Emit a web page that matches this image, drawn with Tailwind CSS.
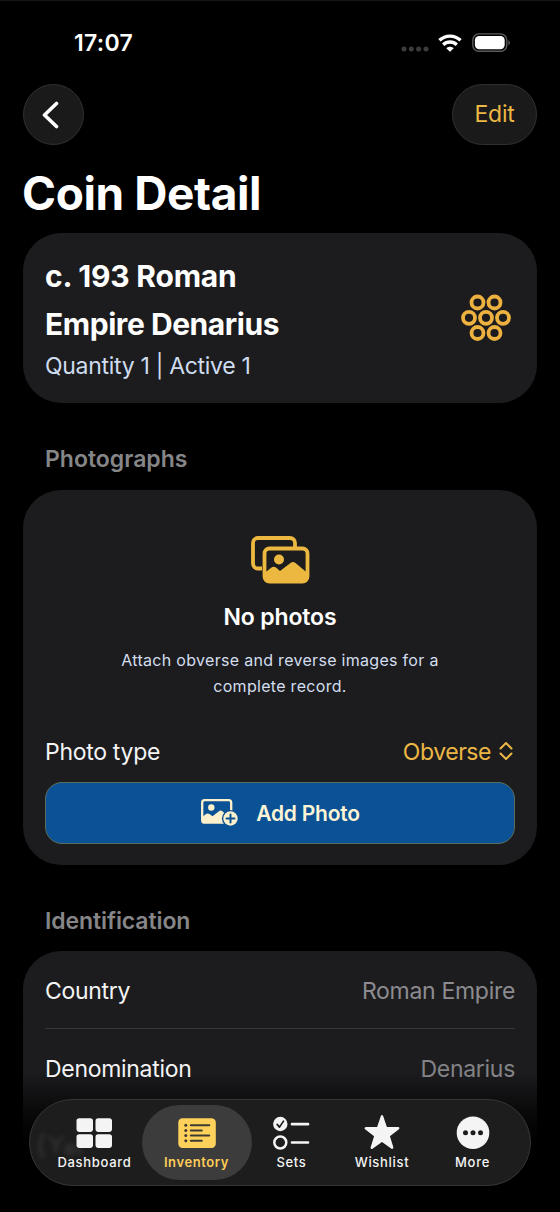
<!DOCTYPE html>
<html lang="en">
<head>
<meta charset="utf-8">
<title>Coin Detail</title>
<script src="https://cdn.jsdelivr.net/npm/@tailwindcss/browser@4"></script>
</head>
<body class="bg-black">
<div class="relative w-[560px] h-[1212px] overflow-hidden bg-black border-t border-[#161616] text-white font-['Inter',sans-serif] whitespace-nowrap">

  <!-- Status bar -->
  <header class="h-[83px] flex items-start justify-between pt-[28px] pl-[74px] pr-[49px]">
    <span class="text-[23px] leading-[28px] font-semibold tracking-[0.3px]">17:07</span>
    <span class="flex items-center h-[28px]">
      <svg width="28" height="6" viewBox="0 0 28 6" class="mt-[11px]" fill="#3c3c3c"><circle cx="3" cy="3" r="2.5"/><circle cx="10.3" cy="3" r="2.5"/><circle cx="17.6" cy="3" r="2.5"/><circle cx="25" cy="3" r="2.5"/></svg>
      <svg width="24" height="18" viewBox="0 0 24 18" class="ml-[9px] -mt-px" fill="none" stroke="#fff" stroke-width="3.300"><path d="M1.400 6.300C7.400.6 16.600.6 22.600 6.300"/><path d="M5.200 10.700C9 7.100 15 7.100 18.800 10.700"/><path d="M12 17.800 8.300 14.300C10.500 12.300 13.500 12.300 15.700 14.300Z" fill="#fff" stroke="none"/></svg>
      <svg width="39" height="19" viewBox="0 0 39 19" class="ml-[10px] -mt-[2px]"><rect x=".8" y=".9" width="34" height="17.400" rx="6" fill="none" stroke="#5b5b5b" stroke-width="1.400"/><rect x="2.900" y="3" width="29.800" height="13.200" rx="4.200" fill="#fff"/><path d="M36.400 7.200c2 .8 2 4.200 0 5Z" fill="#5b5b5b"/></svg>
    </span>
  </header>

  <!-- Navigation -->
  <nav class="flex justify-between px-[23px] h-[61px]">
    <button class="size-[61px] rounded-full bg-[#1a1a1a] border border-[#303030] flex items-center justify-center">
      <svg width="20" height="28" viewBox="0 0 20 28" class="mr-[5px]" fill="none" stroke="#fff" stroke-width="3.600" stroke-linecap="round" stroke-linejoin="round"><path d="M15.500 2.500 3.500 14l12 11.500"/></svg>
    </button>
    <button class="w-[85px] h-[61px] rounded-full bg-[#1a1a1a] border border-[#303030] text-[#ecb745] text-[23px] tracking-[-0.2px]">Edit</button>
  </nav>

  <main>
    <h1 class="pl-[22px] mt-[18px] h-[70px] text-[46px] leading-[60px] font-bold tracking-[-0.4px]">Coin Detail</h1>

    <section class="mx-[23px] h-[170px] rounded-[38px] bg-[#1c1c1e] flex items-center justify-between pl-[22px] pr-[25px]">
      <div>
        <h2 class="text-[30px] leading-[48px] font-bold tracking-[-0.5px]"><span class="tracking-[-0.200px]">c. 193 Roman</span><br><span class="tracking-[-0.450px]">Empire Denarius</span></h2>
        <p class="text-[23px] leading-[36px] text-[#cfdcf0] tracking-[-0.300px]">Quantity 1 | Active 1</p>
      </div>
      <svg width="52" height="48" viewBox="0 0 52 48" fill="none" stroke="#ecb13f" stroke-width="3.800"><circle cx="17.500" cy="8.500" r="6"/><circle cx="34.500" cy="8.500" r="6"/><circle cx="9" cy="23.800" r="6"/><circle cx="26" cy="23.800" r="6"/><circle cx="43" cy="23.800" r="6"/><circle cx="17.500" cy="39" r="6"/><circle cx="34.500" cy="39" r="6"/></svg>
    </section>

    <h3 class="pl-[45px] h-[87px] pt-[42px] text-[23px] leading-[28px] font-semibold text-[#868688] tracking-[0px]">Photographs</h3>

    <section class="mx-[23px] h-[375px] rounded-[38px] bg-[#1c1c1e] px-[22px] pt-[45px] flex flex-col">
      <svg width="60" height="50" viewBox="0 0 60 50" class="self-center" fill="none" stroke="#ecb840" stroke-width="3.800"><path d="M12 33.500H8A5 5 0 0 1 3 28.500V8A5 5 0 0 1 8 3H40A5 5 0 0 1 45 8V12"/><rect x="14.500" y="13.500" width="43" height="33" rx="5"/><circle cx="29" cy="24.500" r="5" fill="#ecb840" stroke="none"/><path d="M14.500 38 21.500 32.500Q24 31 26.300 32.800L30 36 40.500 28Q43 26 45.500 28L57.500 38V43Q57 47 53 47H18Q14.500 47 14.500 43Z" fill="#ecb840" stroke="none"/></svg>
      <h4 class="mt-[17px] text-center text-[23px] leading-[30px] font-semibold tracking-[-0.150px]">No photos</h4>
      <p class="mt-[15px] text-center text-[16px] leading-[26px] text-[#d3deef] tracking-[0.300px]">Attach obverse and reverse images for a<br>complete record.</p>
      <div class="mt-[38px] h-[30px] flex items-center justify-between text-[23px] leading-[30px] tracking-[-0.300px]">
        <span class="text-[#f4f4f5]">Photo type</span>
        <span class="flex items-center text-[#ecb745] tracking-[-0.450px]">Obverse
          <svg width="16" height="20" viewBox="0 0 16 20" class="ml-[7px] mr-px -mt-[3px]" fill="none" stroke="#ecb745" stroke-width="2" stroke-linecap="round" stroke-linejoin="round"><path d="M2.500 7.500 8 2l5.500 5.500M2.500 12.500 8 18l5.500-5.500"/></svg>
        </span>
      </div>
      <button class="mt-[15px] h-[62px] rounded-[17px] bg-[#0b5195] border border-[#5a6e60] flex items-center justify-center text-[#fdf5d5] text-[21px] font-semibold">
        <svg width="40" height="30" viewBox="0 0 40 30" class="mr-[16px] -mt-[2px]" fill="none"><rect x="2.200" y="3.200" width="29" height="22.500" rx="2.500" stroke="#fdf0cc" stroke-width="2.300"/><circle cx="11.300" cy="10.500" r="3.200" fill="#fdf0cc"/><path d="M2 20 6.500 16.800Q8 16 9.500 17L12.500 19.300 19 14.200Q20.500 13 22 14L27 18V26H4.500Q2 26 2 23.500Z" fill="#fdf0cc"/><circle cx="30.500" cy="21.500" r="8.600" fill="#0b5195"/><circle cx="30.500" cy="21.500" r="7.200" fill="#fdf0cc"/><path d="M30.500 17.500v8M26.500 21.500h8" stroke="#0b5195" stroke-width="2" stroke-linecap="round"/></svg>
        <span class="mt-px tracking-[-0.250px]">Add Photo</span>
      </button>
    </section>

    <h3 class="pl-[45px] h-[86px] pt-[42px] text-[23px] leading-[28px] font-semibold text-[#868688] tracking-[-0.100px]">Identification</h3>

    <section class="mx-[23px] h-[240px] rounded-t-[38px] bg-linear-to-b from-[#1c1c1e] from-50% to-black to-95% px-[22px] text-[23px] tracking-[-0.300px]">
      <div class="h-[78px] pt-[3px] flex items-center justify-between border-b border-[#37373a]"><span class="text-[#f4f4f5]">Country</span><span class="text-[#8c8c90]">Roman Empire</span></div>
      <div class="h-[78px] pt-[2px] flex items-center justify-between"><span class="text-[#f4f4f5]">Denomination</span><span class="text-[#838387]">Denarius</span></div>
    </section>
  </main>

  <!-- Floating tab bar -->
  <nav class="absolute left-[29px] top-[1098px] w-[502px] h-[87px] rounded-full bg-[#1d1d1d] border border-[#363636] overflow-hidden text-[13px] leading-[16px] font-medium tracking-[0.700px] text-[#f4f4f4]">
    <!-- Blurred row showing through the glass -->
    <svg class="absolute left-[4px] top-[30px] blur-[2px]" width="60" height="34" viewBox="0 0 60 34" fill="none" stroke="#2e2e2e" stroke-width="3.500"><path d="M10 4Q2 15 10 28M15 6l7 9 7-9M22 15v9M32 20h9q-1-6-5-5-5 1-4 6 3 5 8 2M46 16v9"/></svg>
    <div class="relative h-full flex pt-[5px] pl-[16px]">
      <div class="w-[96px] flex flex-col items-center pt-[11px]">
        <svg width="38" height="34" viewBox="0 0 38 34" fill="#f4f4f4"><rect x="1.500" y="2.300" width="16.500" height="13.600" rx="2.800"/><rect x="20.500" y="2.300" width="16.500" height="13.600" rx="2.800"/><rect x="1.500" y="18.300" width="16.500" height="13.600" rx="2.800"/><rect x="20.500" y="18.300" width="16.500" height="13.600" rx="2.800"/></svg>
        <span class="mt-[4px] ml-px">Dashboard</span>
      </div>
      <div class="w-[110px] h-[75px] rounded-full bg-[#3c3c3c] flex flex-col items-center pt-[11px] text-[#fecd57] font-semibold tracking-[0.600px]">
        <svg width="40" height="34" viewBox="0 0 40 34"><rect x="1.300" y="2.300" width="37.500" height="29.700" rx="4.200" fill="#fed25a"/><g fill="#3c3a33"><circle cx="8.800" cy="9.200" r="1.500"/><circle cx="8.800" cy="14.400" r="1.500"/><circle cx="8.800" cy="19.600" r="1.500"/><circle cx="8.800" cy="24.800" r="1.500"/></g><path d="M13.800 9.200h18.500M13.800 14.400h11M13.800 19.600h18.500M13.800 24.800h11" stroke="#3c3a33" stroke-width="2" stroke-linecap="round"/></svg>
        <span class="mt-[4px] -ml-px">Inventory</span>
      </div>
      <div class="w-[78px] flex flex-col items-center pt-[11px]">
        <svg width="38" height="34" viewBox="0 0 38 34" fill="none"><circle cx="8.300" cy="8" r="7.200" fill="#f4f4f4"/><path d="m5.200 8.400 2.300 2.700 4-6" stroke="#1d1d1d" stroke-width="1.700" stroke-linecap="round" stroke-linejoin="round"/><circle cx="8.300" cy="26.500" r="6" stroke="#f4f4f4" stroke-width="2.500"/><path d="M20 8.200h16M20 26.500h16" stroke="#f4f4f4" stroke-width="2.700" stroke-linecap="round"/></svg>
        <span class="mt-[4px] ml-px">Sets</span>
      </div>
      <div class="w-[104px] flex flex-col items-center pt-[9px]">
        <svg width="38" height="36" viewBox="0 0 38 36" fill="#f4f4f4" stroke="#f4f4f4" stroke-width="2.400" stroke-linejoin="round"><path d="M19 2.300 23 14.200 35.200 14.300 25.500 21.700 29.200 33.700 19 26.500 8.800 33.700 12.500 21.700 2.800 14.300 15 14.200Z"/></svg>
        <span class="mt-[4px]">Wishlist</span>
      </div>
      <div class="w-[77px] flex flex-col items-center pt-[11px]">
        <svg width="34" height="34" viewBox="0 0 34 34"><circle cx="17" cy="16.800" r="16.300" fill="#f4f4f4"/><g fill="#1d1d1d"><circle cx="9.500" cy="16.800" r="2.500"/><circle cx="17" cy="16.800" r="2.500"/><circle cx="24.500" cy="16.800" r="2.500"/></g></svg>
        <span class="mt-[4px]">More</span>
      </div>
    </div>
  </nav>
</div>
</body>
</html>
